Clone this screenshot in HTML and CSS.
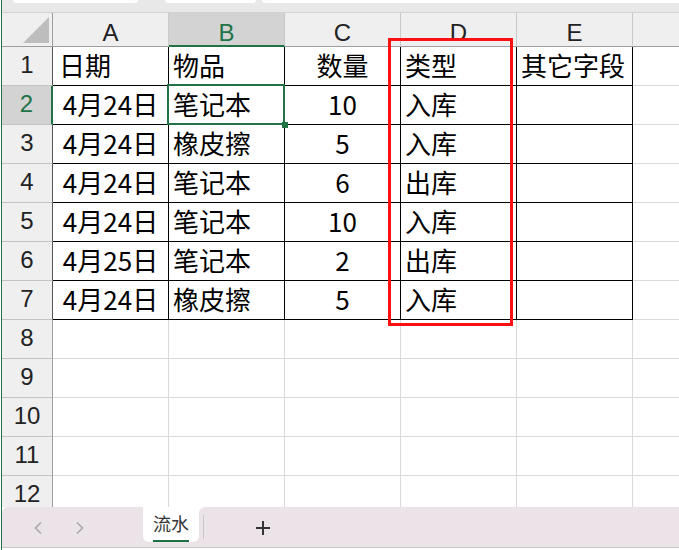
FILE: index.html
```html
<!DOCTYPE html>
<html lang="zh">
<head>
<meta charset="utf-8">
<title>流水</title>
<link rel="stylesheet" href="styles.css">
</head>
<body>
<div class="app">
  <div class="topstrip">
    <span class="pill p1"></span><span class="pill p2"></span><span class="pill p3"></span>
  </div>
  <div class="sheet">
    <div class="grid">
      <div class="corner"><svg width="50" height="33" viewBox="0 0 50 33"><polygon points="21,30 47,30 47,4" fill="#bdbdbd"/></svg></div>
      <div class="ch">A</div><div class="ch sel">B</div><div class="ch">C</div><div class="ch">D</div><div class="ch">E</div><div class="ch"></div>

      <div class="rh dark">1</div>
      <div class="c t l a1">日期</div><div class="c t l">物品</div><div class="c t m">数量</div><div class="c t l">类型</div><div class="c t l">其它字段</div><div class="c"></div>

      <div class="rh sel">2</div>
      <div class="c t m">4月24日</div><div class="c t l active">笔记本</div><div class="c t m">10</div><div class="c t l">入库</div><div class="c t"></div><div class="c"></div>

      <div class="rh dark">3</div>
      <div class="c t m">4月24日</div><div class="c t l">橡皮擦</div><div class="c t m">5</div><div class="c t l">入库</div><div class="c t"></div><div class="c"></div>

      <div class="rh dark">4</div>
      <div class="c t m">4月24日</div><div class="c t l">笔记本</div><div class="c t m">6</div><div class="c t l">出库</div><div class="c t"></div><div class="c"></div>

      <div class="rh dark">5</div>
      <div class="c t m">4月24日</div><div class="c t l">笔记本</div><div class="c t m">10</div><div class="c t l">入库</div><div class="c t"></div><div class="c"></div>

      <div class="rh dark">6</div>
      <div class="c t m">4月25日</div><div class="c t l">笔记本</div><div class="c t m">2</div><div class="c t l">出库</div><div class="c t"></div><div class="c"></div>

      <div class="rh dark">7</div>
      <div class="c t m">4月24日</div><div class="c t l">橡皮擦</div><div class="c t m">5</div><div class="c t l">入库</div><div class="c t"></div><div class="c"></div>

      <div class="rh">8</div>
      <div class="c"></div><div class="c"></div><div class="c"></div><div class="c"></div><div class="c"></div><div class="c"></div>
      <div class="rh">9</div>
      <div class="c"></div><div class="c"></div><div class="c"></div><div class="c"></div><div class="c"></div><div class="c"></div>
      <div class="rh">10</div>
      <div class="c"></div><div class="c"></div><div class="c"></div><div class="c"></div><div class="c"></div><div class="c"></div>
      <div class="rh">11</div>
      <div class="c"></div><div class="c"></div><div class="c"></div><div class="c"></div><div class="c"></div><div class="c"></div>
      <div class="rh">12</div>
      <div class="c"></div><div class="c"></div><div class="c"></div><div class="c"></div><div class="c"></div><div class="c"></div>
    </div>
    <div class="redbox"></div>
  </div>
  <div class="tabbar">
    <div class="nav">
      <svg class="chev" width="10" height="14" viewBox="0 0 10 14"><polyline points="8,1.5 2.5,7 8,12.5" fill="none" stroke="#a8a8a8" stroke-width="1.6"/></svg>
      <svg class="chev" width="10" height="14" viewBox="0 0 10 14"><polyline points="2,1.5 7.5,7 2,12.5" fill="none" stroke="#a8a8a8" stroke-width="1.6"/></svg>
    </div>
    <div class="tabwrap"><div class="tab"><span class="tabname">流水</span></div></div>
    <div class="rest">
      <span class="sep"></span>
      <svg class="plus" width="16" height="16" viewBox="0 0 16 16"><path d="M8 1v14M1 8h14" stroke="#333" stroke-width="2"/></svg>
    </div>
  </div>
</div>
</body>
</html>
```
FILE: styles.css
```css
* { box-sizing: border-box; }
html, body { margin: 0; padding: 0; background: #fff; }
body { width: 679px; height: 550px; overflow: hidden; }

.app {
  margin-left: 1px;
  border-left: 1px solid #217346;
  height: 550px;
  display: flex;
  flex-direction: column;
  overflow: hidden;
}

.topstrip {
  height: 13px;
  flex: none;
  background: #e8e8e8;
  border-bottom: 1px solid #d2d2d2;
  display: flex;
  align-items: flex-start;
}
.pill { height: 3px; background: #fff; border-radius: 0 0 5px 5px; }
.p1 { margin-left: 11px; width: 125px; }
.p2 { margin-left: 27px; width: 91px; }
.p3 { margin-left: 6px; flex: 1; border-radius: 0 0 0 5px; }

.sheet {
  position: relative;
  height: 494px;
  flex: none;
  overflow: hidden;
}

.grid {
  display: grid;
  grid-template-columns: 51px repeat(6, 116px);
  grid-template-rows: 34px;
  grid-auto-rows: 39px;
  width: 747px;
}

.corner {
  background: #efefef;
  border-right: 1px solid #9e9e9e;
  border-bottom: 1px solid #9e9e9e;
}
.corner svg { display: block; }

.ch {
  background: #efefef;
  border-right: 1px solid #cacaca;
  border-bottom: 1px solid #9e9e9e;
  font-family: "Liberation Sans", Arial, sans-serif;
  font-size: 24px;
  line-height: 28px;
  color: #222;
  text-align: center;
  padding-top: 6px;
}
.ch.sel {
  background: #d3d3d3;
  color: #217346;
  border-bottom: 2px solid #217346;
}

.rh {
  background: #efefef;
  border-right: 1px solid #9e9e9e;
  border-bottom: 1px solid #c2c2c2;
  font-family: "Liberation Sans", Arial, sans-serif;
  font-size: 24px;
  color: #222;
  display: flex;
  align-items: center;
  justify-content: center;
  padding-bottom: 3px;
}
.rh.sel {
  background: #d3d3d3;
  color: #217346;
  border-right: 2px solid #217346;
}
.rh.dark { border-right-color: #555; }

.c {
  border-right: 1px solid #dadada;
  border-bottom: 1px solid #dadada;
  font-family: "Noto Sans CJK SC", "Noto Sans", sans-serif;
  font-size: 26px;
  line-height: 34px;
  color: #000;
  display: flex;
  align-items: center;
  white-space: nowrap;
  padding: 0 3px 3px 4px;
}
.c.t { border-right-color: #000; border-bottom-color: #000; }
.c.l { justify-content: flex-start; }
.c.m { justify-content: center; padding-left: 3px; padding-right: 3px; }
.c.a1 { padding-left: 6px; }

.c.active { position: relative; }
.c.active::after {
  content: "";
  position: absolute;
  top: -2px; left: -2px; right: -1px; bottom: -1px;
  border: 2px solid #217346;
}
.c.active::before {
  content: "";
  position: absolute;
  right: -4px; bottom: -4px;
  width: 6px; height: 6px;
  background: #217346;
  z-index: 2;
}

.redbox {
  position: absolute;
  left: 386px;
  top: 25px;
  width: 125px;
  height: 288px;
  border: 3px solid #ff1010;
}

.tabbar {
  height: 41px;
  flex: none;
  display: flex;
  border-bottom: 1px solid #c8c8c8;
  background: #fff;
}
.nav {
  width: 141px;
  background: #ebe3e8;
  border-top-left-radius: 6px;
  display: flex;
  align-items: center;
  padding-left: 31px;
  gap: 32px;
}
.chev { display: block; margin-top: 1px; }
.tabwrap {
  width: 56px;
  background: #ebe3e8;
}
.tab {
  height: 35px;
  background: #fff;
  border-radius: 0 0 6px 6px;
  display: flex;
  justify-content: center;
  padding-top: 4px;
}
.tabname {
  font-family: "Noto Sans CJK SC", "Noto Sans", sans-serif;
  font-size: 18px;
  line-height: 25px;
  height: 31px;
  color: #333;
  border-bottom: 2px solid #1e7145;
}
.rest {
  flex: 1;
  background: #ebe3e8;
  border-top-left-radius: 6px;
  display: flex;
  align-items: center;
  padding-left: 4px;
}
.sep {
  width: 1px;
  height: 24px;
  background: #cbc4c9;
}
.plus { display: block; margin-left: 51px; margin-top: 1px; }
```
